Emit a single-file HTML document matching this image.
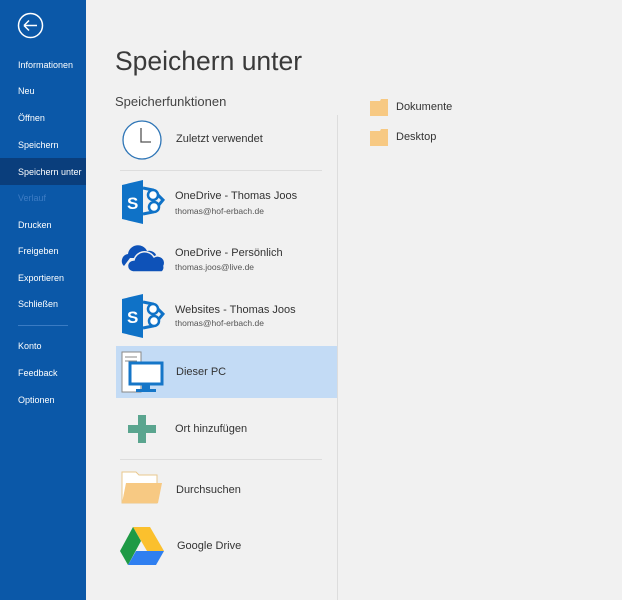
<!DOCTYPE html>
<html><head><meta charset="utf-8"><style>
body{margin:0;width:622px;height:600px;background:#f1f1f1;font-family:"Liberation Sans",sans-serif;position:relative;overflow:hidden;color:#262626}
.sb{position:absolute;left:0;top:0;width:86px;height:600px;background:#0b58a8}
.sb div{position:absolute;left:18px;color:#fff;font-size:9px;transform:translateY(-50%)}
.sel{position:absolute;left:0;top:158px;width:86px;height:27px;background:#0a3e7c}
.a{position:absolute;white-space:nowrap}
.t{font-size:11px;color:#333}
.s{font-size:8.5px;color:#555}
</style></head><body>
<div class="sb">
<svg style="position:absolute;left:17px;top:12px" width="27" height="27"><circle cx="13.5" cy="13.5" r="12" fill="none" stroke="#fff" stroke-width="1.5"/><path d="M7 13.5H20M7 13.5L12 8.5M7 13.5L12 18.5" stroke="#fff" stroke-width="1.5" fill="none"/></svg>
<div class="sel" style="left:0;transform:none"></div>
<div style="top:65px">Informationen</div>
<div style="top:91px">Neu</div>
<div style="top:118px">Öffnen</div>
<div style="top:145px">Speichern</div>
<div style="top:172px">Speichern unter</div>
<div style="top:198px;color:#3d7cc4">Verlauf</div>
<div style="top:225px">Drucken</div>
<div style="top:251px">Freigeben</div>
<div style="top:278px">Exportieren</div>
<div style="top:304px">Schließen</div>
<span style="position:absolute;left:18px;top:325px;width:50px;height:1px;background:#3a7bc3"></span>
<div style="top:346px">Konto</div>
<div style="top:373px">Feedback</div>
<div style="top:400px">Optionen</div>
</div>
<div class="a" style="left:115px;top:46px;font-size:26.5px;color:#3a3a3a">Speichern unter</div>
<div class="a" style="left:115px;top:94px;font-size:13px;color:#444">Speicherfunktionen</div>
<div style="position:absolute;left:337px;top:115px;width:1px;height:485px;background:#ddd"></div>
<svg class="a" style="left:122px;top:120px" width="40" height="40"><circle cx="20" cy="20" r="19" fill="#fff" stroke="#2e75b6" stroke-width="1.3"/><path d="M19 8V22H29" fill="none" stroke="#555" stroke-width="1.3"/></svg>
<div class="a t" style="left:176px;top:133px">Zuletzt verwendet</div>
<div style="position:absolute;left:120px;top:170px;width:202px;height:1px;background:#ddd"></div>
<svg class="a" style="left:120px;top:180px" width="46" height="44"><path d="M2 5L23 0V44L2 39Z" fill="#0f72c7"/><path d="M23 8 L33 10 L43 20 L33 32 L23 34" fill="none" stroke="#0f72c7" stroke-width="3"/><circle cx="33" cy="15" r="5" fill="#fff" stroke="#0f72c7" stroke-width="2.5"/><circle cx="34" cy="27" r="5" fill="#fff" stroke="#0f72c7" stroke-width="2.5"/><text x="7" y="29" fill="#fff" font-size="17" font-weight="bold" font-family="Liberation Sans">S</text></svg>
<div class="a t" style="left:175px;top:190px">OneDrive - Thomas Joos</div>
<div class="a s" style="left:175px;top:206px">thomas@hof-erbach.de</div>
<svg class="a" style="left:120px;top:240px" width="45" height="33"><path d="M4 26a7 7 0 0 1 4-12a10 10 0 0 1 19-3a8 8 0 0 1 10 7H10Z" fill="#0e52b8"/><path d="M13 32a6 6 0 0 1 1-12a11 11 0 0 1 20-3a7 7 0 0 1 10 9a6 6 0 0 1-2 6Z" fill="#0e52b8" stroke="#f1f1f1" stroke-width="1.5"/></svg>
<div class="a t" style="left:175px;top:247px">OneDrive - Persönlich</div>
<div class="a s" style="left:175px;top:262px">thomas.joos@live.de</div>
<svg class="a" style="left:120px;top:294px" width="46" height="44"><path d="M2 5L23 0V44L2 39Z" fill="#0f72c7"/><path d="M23 8 L33 10 L43 20 L33 32 L23 34" fill="none" stroke="#0f72c7" stroke-width="3"/><circle cx="33" cy="15" r="5" fill="#fff" stroke="#0f72c7" stroke-width="2.5"/><circle cx="34" cy="27" r="5" fill="#fff" stroke="#0f72c7" stroke-width="2.5"/><text x="7" y="29" fill="#fff" font-size="17" font-weight="bold" font-family="Liberation Sans">S</text></svg>
<div class="a t" style="left:175px;top:304px">Websites - Thomas Joos</div>
<div class="a s" style="left:175px;top:318px">thomas@hof-erbach.de</div>
<div style="position:absolute;left:116px;top:346px;width:221px;height:52px;background:#c3dbf5"></div>
<svg class="a" style="left:121px;top:351px" width="45" height="42"><rect x="1" y="1" width="19" height="40" fill="#fff" stroke="#888"/><path d="M4 6H16M4 10H16" stroke="#888"/><rect x="9" y="12" width="32" height="21" fill="#fff" stroke="#1576c8" stroke-width="3"/><rect x="21" y="34" width="8" height="4" fill="#1576c8"/><rect x="15" y="38" width="20" height="3" fill="#1576c8"/></svg>
<div class="a t" style="left:176px;top:366px">Dieser PC</div>
<svg class="a" style="left:128px;top:415px" width="28" height="28"><path d="M10 0H18V10H28V18H18V28H10V18H0V10H10Z" fill="#5aa58f"/></svg>
<div class="a t" style="left:175px;top:423px">Ort hinzufügen</div>
<div style="position:absolute;left:120px;top:459px;width:202px;height:1px;background:#ddd"></div>
<svg class="a" style="left:121px;top:471px" width="42" height="33"><path d="M1 1H15L18 4H36V32H1Z" fill="#fff" stroke="#e9c88d"/><path d="M5 12H41L37 32H1Z" fill="#f7c983"/></svg>
<div class="a t" style="left:176px;top:484px">Durchsuchen</div>
<svg class="a" style="left:120px;top:527px" width="44" height="40"><path d="M13 0H30L44 24H27Z" fill="#fbc02d"/><path d="M13 0L0 24L8 38L21 14Z" fill="#1e9a45"/><path d="M8 38H36L44 24H16Z" fill="#2f7ff0"/></svg>
<div class="a t" style="left:177px;top:540px">Google Drive</div>
<svg class="a" style="left:370px;top:99px" width="20" height="17"><path d="M0 2H10L11 0H18V17H0Z" fill="#f7c983"/></svg>
<div class="a t" style="left:396px;top:101px">Dokumente</div>
<svg class="a" style="left:370px;top:129px" width="20" height="17"><path d="M0 2H10L11 0H18V17H0Z" fill="#f7c983"/></svg>
<div class="a t" style="left:396px;top:131px">Desktop</div>
</body></html>
